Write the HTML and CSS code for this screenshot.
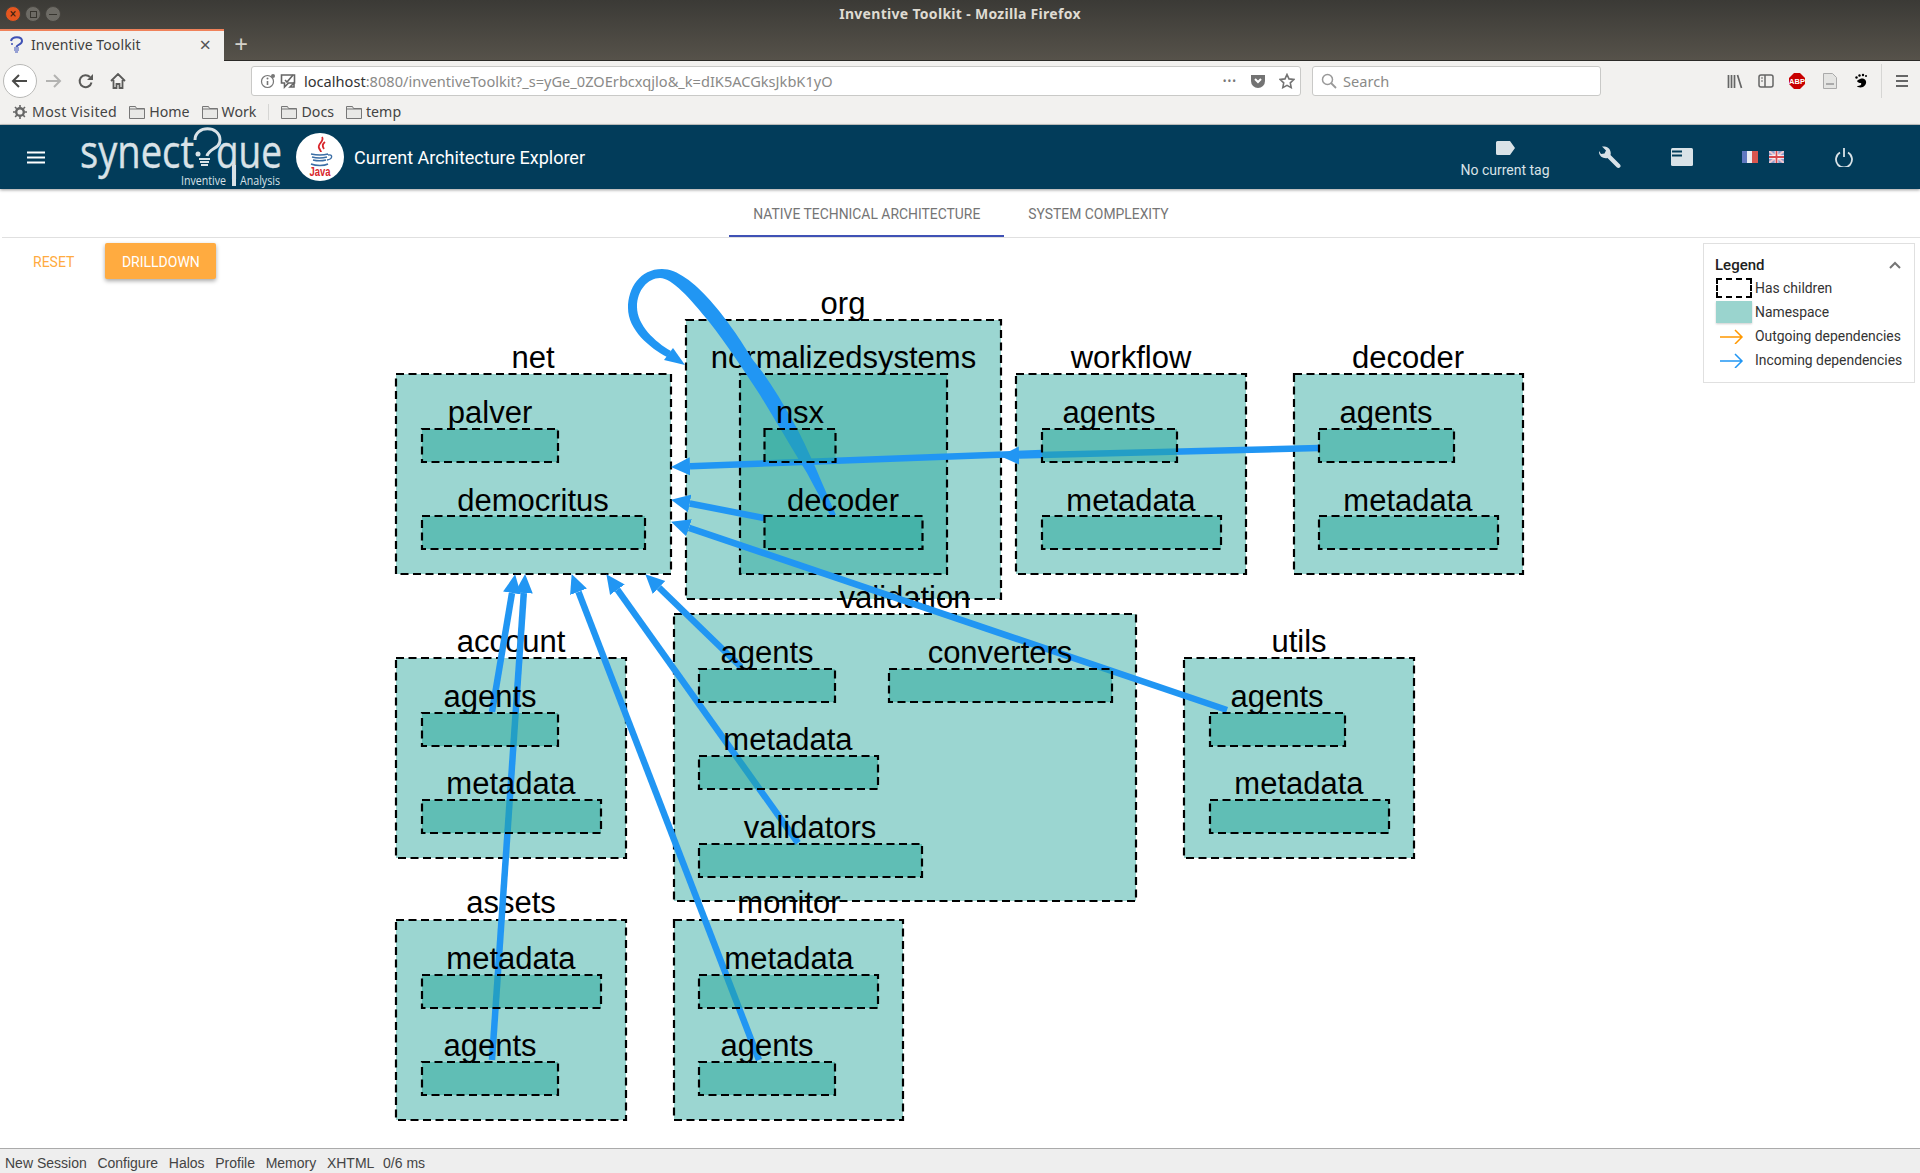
FILE: index.html
```html
<!DOCTYPE html>
<html>
<head>
    <title>Inventive Toolkit</title>
    <link rel="stylesheet" href="styles.css">
</head>
<body>
    <div class="window-top">
        <div class="titlebar">
            <div class="win-buttons">
                <span class="win-btn win-close">&#215;</span>
                <span class="win-btn"><i class="win-max"></i></span>
                <span class="win-btn"><i class="win-min"></i></span>
            </div>
            <div class="win-title">Inventive Toolkit - Mozilla Firefox</div>
        </div>
        <div class="tabstrip">
            <div class="tab">
                <svg class="tab-icon" width="16" height="18" viewBox="0 0 16 18"><path d="M2 5 C3 0 13 0 13 5 C13 9 8 8 7.5 11" fill="none" stroke="#3f51b5" stroke-width="2"/><circle cx="3" cy="8" r="1" fill="#3f51b5"/><path d="M5 12h5M5 14h5M6 16h3" stroke="#7986cb" stroke-width="1.4"/></svg>
                <span class="tab-name">Inventive Toolkit</span>
                <span class="tab-close">&#215;</span>
            </div>
            <span class="tab-new">+</span>
        </div>
    </div>

    <div class="navbar">
        <span class="nav-back">
            <svg width="18" height="18" viewBox="0 0 18 18"><path d="M16 9H2M8 3L2 9l6 6" fill="none" stroke="#4a4a48" stroke-width="2"/></svg>
        </span>
        <svg class="nav-icon nav-fwd" width="18" height="18" viewBox="0 0 18 18"><path d="M2 9h14M10 3l6 6-6 6" fill="none" stroke="#b3b3b1" stroke-width="2"/></svg>
        <svg class="nav-icon nav-reload" width="16" height="16" viewBox="0 0 16 16"><path d="M13.5 9.5A6 6 0 1 1 12 4" fill="none" stroke="#5a5a58" stroke-width="2"/><path d="M15 1v6H9z" fill="#5a5a58"/></svg>
        <svg class="nav-icon nav-home" width="16" height="16" viewBox="0 0 16 16"><path d="M1 8l7-7 7 7M3.5 7v8h3v-4h3v4h3V7" fill="none" stroke="#5a5a58" stroke-width="1.8"/></svg>
        <div class="urlbar">
            <svg class="url-info" width="16" height="16" viewBox="0 0 16 16"><circle cx="7.5" cy="8.5" r="6" fill="none" stroke="#777" stroke-width="1.2"/><path d="M7.5 8v4" stroke="#777" stroke-width="1.6"/><circle cx="7.5" cy="5.6" r="1" fill="#777"/><circle cx="13" cy="3" r="2" fill="#777"/></svg>
            <svg class="url-track" width="16" height="16" viewBox="0 0 16 16"><path d="M1.5 2h13v8h-6l-4 4v-4h-3z" fill="none" stroke="#666" stroke-width="1.6"/><path d="M5 7l2 2 6-7M10 14l4-4v4z" fill="none" stroke="#666" stroke-width="1.6"/></svg>
            <span class="url-text"><b>localhost</b>:8080/inventiveToolkit?_s=yGe_0ZOErbcxqjlo&amp;_k=dIK5ACGksJkbK1yO</span>
            <span class="url-dots">&#8226;&#8226;&#8226;</span>
            <svg class="url-pocket" width="16" height="16" viewBox="0 0 16 16"><path d="M1 2h14v6a7 7 0 0 1-14 0z" fill="#737373"/><path d="M5 6l3 3 3-3" fill="none" stroke="#fff" stroke-width="2"/></svg>
            <svg class="url-star" width="16" height="16" viewBox="0 0 16 16"><path d="M8 1.5l2 4.4 4.8.6-3.5 3.3.9 4.8L8 12.3l-4.2 2.3.9-4.8L1.2 6.5 6 5.900z" fill="none" stroke="#737373" stroke-width="1.6"/></svg>
        </div>
        <div class="searchbar">
            <svg width="16" height="16" viewBox="0 0 16 16"><circle cx="6.500" cy="6.500" r="5" fill="none" stroke="#999" stroke-width="1.500"/><path d="M10 10l5 5" stroke="#999" stroke-width="1.800"/></svg>
            <span>Search</span>
        </div>
        <div class="nav-tools">
            <svg width="16" height="16" viewBox="0 0 16 16"><path d="M1.500 2v13M4.500 2v13M7.500 2v13M10.500 2l4 13" stroke="#666" stroke-width="1.700" fill="none"/></svg>
            <svg width="16" height="16" viewBox="0 0 16 16"><rect x="1" y="2" width="14" height="12" rx="2" fill="none" stroke="#666" stroke-width="1.500"/><path d="M7 2v12" stroke="#666" stroke-width="1.500"/><path d="M3 5h2M3 8h2" stroke="#666"/></svg>
            <svg width="16" height="16" viewBox="0 0 16 16"><path d="M5 0h6l5 5v6l-5 5H5l-5-5V5z" fill="#c80000"/><text class="abp-text" x="8" y="11">ABP</text></svg>
            <svg class="tool-doc" width="14" height="16" viewBox="0 0 14 16"><path d="M.5.500h9l4 4v11H.5z" fill="#e4e4e2" stroke="#aaa"/><rect x="3" y="10" width="8" height="2" fill="#aaa"/></svg>
            <svg class="tool-foot" width="13" height="16" viewBox="0 0 13 16"><path d="M9 6c3 1 3 6-1 8-3 1-6 0-6-1 3 0 5-1 4-3-3 0-5-2-3-3 2-1 4-2 6-1z" fill="#000"/><circle cx="1.500" cy="4.500" r="1.200"/><circle cx="4.500" cy="2.500" r="1.200"/><circle cx="8" cy="2" r="1.200"/><circle cx="11" cy="3" r="1"/></svg>
            <i class="tool-sep"></i>
            <svg class="tool-menu" width="12" height="12" viewBox="0 0 12 12"><path d="M0 1h12M0 6h12M0 11h12" stroke="#666" stroke-width="2"/></svg>
        </div>
    </div>

    <div class="bookmarks">
        <span class="bm bm-first">
            <svg width="14" height="14" viewBox="0 0 14 14"><circle cx="7" cy="7" r="3.800" fill="none" stroke="#666" stroke-width="2.400"/><path d="M7 0v14M0 7h14M2 2l10 10M12 2L2 12" stroke="#666" stroke-width="1.600" stroke-dasharray="2.400 9.200"/></svg>
            Most Visited
        </span>
        <span class="bm"><svg class="folder" width="16" height="14" viewBox="0 0 16 14"><path d="M.5 13.500V1.500h6l1 2h8v10z" fill="#e8e8e6" stroke="#777"/><path d="M.5 4h15" stroke="#777"/></svg>Home</span>
        <span class="bm"><svg class="folder" width="16" height="14" viewBox="0 0 16 14"><path d="M.5 13.500V1.500h6l1 2h8v10z" fill="#e8e8e6" stroke="#777"/><path d="M.5 4h15" stroke="#777"/></svg>Work</span>
        <i class="bm-sep"></i>
        <span class="bm"><svg class="folder" width="16" height="14" viewBox="0 0 16 14"><path d="M.5 13.500V1.500h6l1 2h8v10z" fill="#e8e8e6" stroke="#777"/><path d="M.5 4h15" stroke="#777"/></svg>Docs</span>
        <span class="bm"><svg class="folder" width="16" height="14" viewBox="0 0 16 14"><path d="M.5 13.500V1.500h6l1 2h8v10z" fill="#e8e8e6" stroke="#777"/><path d="M.5 4h15" stroke="#777"/></svg>temp</span>
    </div>

    <header class="app-header">
        <svg class="hamburger" width="18" height="13" viewBox="0 0 18 13"><path d="M0 1.500h18M0 6.500h18M0 11.500h18" stroke="#fff" stroke-width="2"/></svg>
        <svg class="logo" width="212" height="84" viewBox="0 -10 212 84">
            <text class="logo-main" x="2" y="43" textLength="114" lengthAdjust="spacingAndGlyphs">synect</text>
            <text class="logo-main" x="138" y="43" textLength="66" lengthAdjust="spacingAndGlyphs">que</text>
            <path d="M156 40v21" stroke="#d9e2e7" stroke-width="4"/>
            <path d="M117 15c0-15 25-15 25 0 0 9-11 8-13 16" fill="none" stroke="#d9e2e7" stroke-width="3"/>
            <circle cx="120" cy="29" r="2.500" fill="#d9e2e7"/>
            <path d="M121 34h11M122 37h9M123 40h7" stroke="#d9e2e7" stroke-width="1.800"/>
            <text class="logo-sub" x="103" y="60" textLength="45" lengthAdjust="spacingAndGlyphs">Inventive</text>
            <text class="logo-sub" x="162" y="60" textLength="40" lengthAdjust="spacingAndGlyphs">Analysis</text>
        </svg>
        <svg class="java" width="48" height="48" viewBox="0 0 48 48">
            <circle cx="24" cy="24" r="24" fill="#fff"/>
            <path d="M26 4c3 4-5 7-3 11 1 2 2 3 2 4M29 9c-3 2-3 4-1 7" fill="none" stroke="#d8262c" stroke-width="1.800"/>
            <path d="M15 21c5 1 13 1 17 0M16 24c4 1 11 1 15 0M17 27c4 1 9 1 13 0M15 31c5 2 13 2 17 0M32 22c5-1 5 4-1 5" fill="none" stroke="#3b6ea5" stroke-width="1.400"/>
            <text class="java-text" x="24" y="43" textLength="21" lengthAdjust="spacingAndGlyphs">Java</text>
        </svg>
        <div class="app-title">Current Architecture Explorer</div>
        <div class="hdr-right">
            <div class="hdr-tag">
                <svg width="19" height="14" viewBox="0 0 19 14"><path d="M1.500 0H14l5 7-5 7H1.500A1.500 1.500 0 0 1 0 12.500v-11A1.500 1.500 0 0 1 1.500 0z" fill="#d9e2e7"/></svg>
                <span>No current tag</span>
            </div>
            <svg class="hdr-wrench" width="22" height="22" viewBox="0 0 22 22"><path d="M21 18.500L11.500 9C12.500 5.500 10.500 1 5.500 0.500L3 .5l4 4-1.500 3-3.500.5-2-3C-.5 10 4 13 8.500 12l9.500 9.500c.8.700 2.200.7 3-.2.800-.8.800-2-.0-2.800z" fill="#d9e2e7"/></svg>
            <svg class="hdr-book" width="22" height="18" viewBox="0 0 22 18"><rect width="22" height="18" rx="1.500" fill="#d9e2e7"/><path d="M1 3.500h10M1 7.500h10" stroke="#023c5a" stroke-width="2"/></svg>
            <div class="flags">
                <svg width="16" height="12" viewBox="0 0 16 12"><rect width="6" height="12" fill="#5f78c0"/><rect x="5" width="6" height="12" fill="#e9ecf2"/><rect x="10" width="6" height="12" fill="#d9564f"/></svg>
                <svg width="15" height="12" viewBox="0 0 15 12"><rect width="15" height="12" fill="#8f9ccc"/><path d="M0 0l15 12M15 0L0 12" stroke="#f1c9cf" stroke-width="2"/><path d="M7.500 0v12M0 6h15" stroke="#fff" stroke-width="3.500"/><path d="M7.500 0v12M0 6h15" stroke="#d9484e" stroke-width="1.800"/></svg>
            </div>
            <svg class="hdr-power" width="18" height="19" viewBox="0 0 18 19"><path d="M5 4.500a8 8 0 1 0 8 0M9 0v9" fill="none" stroke="#d9e2e7" stroke-width="1.800"/></svg>
        </div>
    </header>

    <nav class="tabs">
        <a class="tabs-item tabs-active">NATIVE TECHNICAL ARCHITECTURE</a>
        <a class="tabs-item">SYSTEM COMPLEXITY</a>
    </nav>

    <main class="explorer">
        <svg class="diagram" viewBox="0 238 1920 910" width="1920" height="910">
            <defs>
                <marker id="head" markerUnits="userSpaceOnUse" markerWidth="20" markerHeight="20" refX="0" refY="10" viewBox="0 0 20 20" orient="auto">
                    <path d="M0 1L19 10L0 19Z" fill="#2196f3"/>
                </marker>
            </defs>

            <!-- top level namespaces -->
            <rect class="ns" x="396" y="374" width="275" height="200"/>
            <rect class="ns" x="686" y="320" width="315" height="279"/>
            <rect class="ns" x="1016" y="374" width="230" height="200"/>
            <rect class="ns" x="1294" y="374" width="229" height="200"/>
            <rect class="ns" x="396" y="658" width="230" height="200"/>
            <rect class="ns" x="674" y="614" width="462" height="287"/>
            <rect class="ns" x="1184" y="658" width="230" height="200"/>
            <rect class="ns" x="396" y="920" width="230" height="200"/>
            <rect class="ns" x="674" y="920" width="229" height="200"/>
            <rect class="ns" x="740" y="374" width="207" height="200"/>

            <text class="lbl" x="533" y="368">net</text>
            <text class="lbl" x="843" y="314">org</text>
            <text class="lbl" x="843.500" y="368">normalizedsystems</text>
            <text class="lbl" x="1131" y="368">workflow</text>
            <text class="lbl" x="1408" y="368">decoder</text>
            <text class="lbl" x="511" y="652">account</text>
            <text class="lbl" x="905" y="608">validation</text>
            <text class="lbl" x="1299" y="652">utils</text>
            <text class="lbl" x="511" y="913">assets</text>
            <text class="lbl" x="789" y="913">monitor</text>

            <!-- dependencies -->
            <line class="dep" x1="492" y1="712" x2="512" y2="593" marker-end="url(#head)"/>
            <line class="dep" x1="492" y1="1060" x2="523.800" y2="593" marker-end="url(#head)"/>
            <line class="dep" x1="759" y1="1060" x2="578.500" y2="591.800" marker-end="url(#head)"/>
            <line class="dep" x1="798" y1="843" x2="617.400" y2="589.700" marker-end="url(#head)"/>
            <line class="dep" x1="741" y1="667" x2="659" y2="587.500" marker-end="url(#head)"/>
            <line class="dep" x1="1042" y1="453" x2="690" y2="466.300" marker-end="url(#head)"/>
            <line class="dep" x1="1319" y1="448" x2="1019" y2="455.500" marker-end="url(#head)"/>
            <line class="dep" x1="764" y1="518" x2="689.700" y2="503.500" marker-end="url(#head)"/>
            <line class="dep" x1="1227" y1="710" x2="689" y2="527.800" marker-end="url(#head)"/>
            <path class="dep-loop" d="M836 515C825 490 808 448 795 425C781 400 768 378 753 360C730 322 692 269 662 269C640 269 628 288 628 308C628 330 650 348 667 357L671 351C655 342 637 325 637 307C637 290 648 278 660 278C672 278 690 298 710 323C725 342 745 372 760 395C772 415 790 445 807 473C815 488 823 503 830 515Z"/>
            <path class="dep-loop" d="M673 348L664 360L685 365Z"/>

            <!-- leaf namespaces -->
            <rect class="leaf" x="422" y="429" width="136" height="33"/>
            <rect class="leaf" x="422" y="516" width="223" height="33"/>
            <rect class="leaf" x="764.500" y="429" width="71" height="33"/>
            <rect class="leaf" x="764.500" y="516" width="158" height="33"/>
            <rect class="leaf" x="1042" y="429" width="135" height="33"/>
            <rect class="leaf" x="1042" y="516" width="179" height="33"/>
            <rect class="leaf" x="1319" y="429" width="135" height="33"/>
            <rect class="leaf" x="1319" y="516" width="179" height="33"/>
            <rect class="leaf" x="422" y="713" width="136" height="33"/>
            <rect class="leaf" x="422" y="800" width="179" height="33"/>
            <rect class="leaf" x="699" y="669" width="136" height="33"/>
            <rect class="leaf" x="889" y="669" width="223" height="33"/>
            <rect class="leaf" x="699" y="756" width="179" height="33"/>
            <rect class="leaf" x="699" y="844" width="223" height="33"/>
            <rect class="leaf" x="1210" y="713" width="135" height="33"/>
            <rect class="leaf" x="1210" y="800" width="179" height="33"/>
            <rect class="leaf" x="422" y="975" width="179" height="33"/>
            <rect class="leaf" x="422" y="1062" width="136" height="33"/>
            <rect class="leaf" x="699" y="975" width="179" height="33"/>
            <rect class="leaf" x="699" y="1062" width="136" height="33"/>

            <text class="lbl" x="490" y="423">palver</text>
            <text class="lbl" x="533" y="510.500">democritus</text>
            <text class="lbl" x="800" y="423">nsx</text>
            <text class="lbl" x="843" y="510.500">decoder</text>
            <text class="lbl" x="1109" y="423">agents</text>
            <text class="lbl" x="1131" y="510.500">metadata</text>
            <text class="lbl" x="1386" y="423">agents</text>
            <text class="lbl" x="1408" y="510.500">metadata</text>
            <text class="lbl" x="490" y="707">agents</text>
            <text class="lbl" x="511" y="794">metadata</text>
            <text class="lbl" x="767" y="663">agents</text>
            <text class="lbl" x="1000" y="663">converters</text>
            <text class="lbl" x="788" y="750">metadata</text>
            <text class="lbl" x="810" y="838">validators</text>
            <text class="lbl" x="1277" y="707">agents</text>
            <text class="lbl" x="1299" y="794">metadata</text>
            <text class="lbl" x="511" y="969">metadata</text>
            <text class="lbl" x="490" y="1056">agents</text>
            <text class="lbl" x="789" y="969">metadata</text>
            <text class="lbl" x="767" y="1056">agents</text>
        </svg>

        <div class="actions">
            <button class="btn-reset">RESET</button>
            <button class="btn-drill">DRILLDOWN</button>
        </div>

        <aside class="legend">
            <div class="legend-head">
                <span>Legend</span>
                <svg width="12" height="8" viewBox="0 0 12 8"><path d="M1 7l5-5 5 5" fill="none" stroke="#757575" stroke-width="2"/></svg>
            </div>
            <div class="legend-row"><i class="swatch swatch-dash"></i>Has children</div>
            <div class="legend-row"><i class="swatch swatch-fill"></i>Namespace</div>
            <div class="legend-row">
                <svg class="swatch-arrow" width="36" height="16" viewBox="0 0 36 16"><path d="M4 9h22M19 2l7 7-7 7" fill="none" stroke="#ff9800" stroke-width="1.500"/></svg>Outgoing dependencies
            </div>
            <div class="legend-row">
                <svg class="swatch-arrow" width="36" height="16" viewBox="0 0 36 16"><path d="M4 9h22M19 2l7 7-7 7" fill="none" stroke="#2196f3" stroke-width="1.500"/></svg>Incoming dependencies
            </div>
        </aside>
    </main>

    <footer class="statusbar">
        <a>New Session</a>
        <a>Configure</a>
        <a>Halos</a>
        <a>Profile</a>
        <a>Memory</a>
        <a>XHTML</a>
        <span class="status-time">0/6 ms</span>
    </footer>
</body>
</html>
```

FILE: styles.css
```css
* {
    box-sizing: border-box;
}
html, body {
    margin: 0;
    height: 100%;
}
body {
    display: flex;
    flex-direction: column;
    height: 1173px;
    overflow: hidden;
    font-family: Roboto, sans-serif;
    background-color: #fff;
}

/* browser chrome */
.window-top {
    height: 61px;
    background: linear-gradient(#3b3a36, #56524a);
    border-bottom: 1px solid #2b2a27;
}
.titlebar {
    height: 29px;
    position: relative;
    display: flex;
    align-items: center;
    justify-content: center;
    padding-bottom: 2px;
}
.win-buttons {
    position: absolute;
    left: 5px;
    top: 6px;
    display: flex;
    gap: 4px;
}
.win-btn {
    width: 16px;
    height: 16px;
    border-radius: 50%;
    background-color: #6d6b65;
    border: 1px solid #45433e;
    display: flex;
    align-items: center;
    justify-content: center;
}
.win-close {
    background-color: #e5561f;
    color: #40200f;
    font-size: 12px;
    line-height: 1;
}
.win-max {
    width: 7px;
    height: 7px;
    border: 1px solid #37352f;
}
.win-min {
    width: 8px;
    height: 1px;
    background-color: #37352f;
}
.win-title {
    color: #dfdbd2;
    font: bold 14px "Noto Sans", sans-serif;
    letter-spacing: 0.3px;
}
.tabstrip {
    height: 31px;
    display: flex;
    align-items: stretch;
}
.tab {
    width: 224px;
    height: 32px;
    background-color: #f2f1ef;
    border-top: 2px solid #f0825a;
    display: flex;
    align-items: center;
    padding: 0 13px 3px 9px;
    font: 14px "Noto Sans", sans-serif;
    color: #3f3f3d;
}
.tab-icon {
    flex: none;
    margin-right: 6px;
}
.tab-name {
    flex: 1;
    letter-spacing: 0.1px;
}
.tab-close {
    font-size: 20px;
    line-height: 1;
    color: #555;
}
.tab-new {
    width: 32px;
    text-align: center;
    color: #d5d2ca;
    font: 24px/30px "Noto Sans", sans-serif;
    margin-left: 1px;
}
.navbar {
    height: 43px;
    background-color: #f2f1ef;
    display: flex;
    align-items: center;
    padding: 0 0 3px 3px;
}
.nav-back {
    width: 34px;
    height: 34px;
    border-radius: 50%;
    background-color: #fff;
    border: 1px solid #b9b9b7;
    display: flex;
    align-items: center;
    justify-content: center;
}
.nav-icon {
    flex: none;
}
.nav-fwd {
    margin-left: 7px;
}
.nav-reload {
    margin-left: 16px;
}
.nav-home {
    margin-left: 16px;
}
.urlbar, .searchbar {
    height: 30px;
    background-color: #fff;
    border: 1px solid #c9c9c7;
    border-radius: 3px;
    display: flex;
    align-items: center;
}
.urlbar {
    width: 1050px;
    margin-left: 125px;
    padding-left: 8px;
    font: 14.6px "Noto Sans", sans-serif;
    color: #8a8a88;
}
.url-track {
    margin-left: 4px;
}
.url-text {
    margin-left: 8px;
    flex: 1;
    white-space: nowrap;
}
.url-text b {
    font-weight: normal;
    color: #333;
}
.url-dots {
    color: #777;
    font-size: 10px;
    letter-spacing: 1px;
    margin-right: 13px;
}
.url-pocket {
    margin-right: 13px;
}
.url-star {
    margin-right: 5px;
}
.searchbar {
    width: 289px;
    margin-left: 11px;
    padding-left: 8px;
    gap: 6px;
    font: 14.6px "Noto Sans", sans-serif;
    color: #8a8a88;
}
.nav-tools {
    display: flex;
    align-items: center;
    margin-left: 126px;
    gap: 15px;
}
.abp-text {
    font: bold 7.5px "Liberation Sans", sans-serif;
    fill: #fff;
    text-anchor: middle;
}
.tool-doc, .tool-foot {
    margin-left: 3px;
}
.tool-sep {
    width: 1px;
    height: 34px;
    background-color: #d6d6d4;
    margin-left: -2px;
}
.tool-menu {
    margin-left: -1px;
}
.bookmarks {
    height: 21px;
    background-color: #f2f1ef;
    border-bottom: 1px solid #c8c8c6;
    display: flex;
    align-items: center;
    padding: 0 0 5px 13px;
    font: 14.2px "Noto Sans", sans-serif;
    color: #444;
    gap: 12px;
}
.bm {
    display: flex;
    align-items: center;
    gap: 4px;
}
.bm-first {
    gap: 5px;
    letter-spacing: 0.3px;
}
.bm-sep {
    width: 1px;
    height: 16px;
    background-color: #d6d6d4;
}

/* app header */
.app-header {
    height: 64px;
    background-color: #023c5a;
    display: flex;
    align-items: center;
    padding: 0 67px 0 27px;
    box-shadow: 0 1px 3px rgba(0, 0, 0, 0.4);
    position: relative;
}
.hamburger {
    flex: none;
}
.logo {
    flex: none;
    margin: -10px 0 -10px 33px;
}
.logo-main {
    font: 400 45px "Open Sans", sans-serif;
    fill: #d9e2e7;
    stroke: #d9e2e7;
    stroke-width: 0.4;
}
.logo-sub {
    font: 12px "Open Sans", sans-serif;
    fill: #d9e2e7;
}
.java {
    flex: none;
    margin-left: 6px;
}
.java-text {
    font: bold 12px "Liberation Sans", sans-serif;
    fill: #d8262c;
    text-anchor: middle;
}
.app-title {
    margin-left: 10px;
    color: #fff;
    font-size: 18px;
}
.hdr-right {
    margin-left: auto;
    display: flex;
    align-items: center;
    color: #d9e2e7;
}
.hdr-tag {
    width: 100px;
    display: flex;
    flex-direction: column;
    align-items: center;
    gap: 7px;
    font-size: 14px;
    margin-right: 44px;
    padding-top: 4px;
}
.hdr-wrench {
    margin-right: 50px;
}
.hdr-book {
    margin-right: 49px;
}
.flags {
    display: flex;
    gap: 11px;
    margin-right: 51px;
}

/* page tabs */
.tabs {
    height: 49px;
    display: flex;
    justify-content: center;
    border-bottom: 1px solid #e0e0e0;
    margin-left: 2px;
}
.tabs-item {
    height: 48px;
    padding: 3px 24px 0;
    display: flex;
    align-items: center;
    font-size: 13.9px;
    color: #757575;
    border-bottom: 2px solid transparent;
}
.tabs-active {
    border-bottom-color: #3f51b5;
}

/* explorer */
.explorer {
    flex: 1;
    position: relative;
    min-height: 0;
}
.diagram {
    position: absolute;
    left: 0;
    top: 0;
}
.ns {
    fill: #26a69a;
    fill-opacity: 0.46;
    stroke: #000;
    stroke-width: 2.2;
    stroke-dasharray: 8 4.5;
}
.leaf {
    fill: #26a69a;
    fill-opacity: 0.5;
    stroke: #000;
    stroke-width: 2.2;
    stroke-dasharray: 8 4.5;
}
.lbl {
    font: 31px "Liberation Sans", sans-serif;
    fill: #000;
    text-anchor: middle;
}
.dep {
    stroke: #2196f3;
    stroke-width: 6.5;
}
.dep-loop {
    fill: #2196f3;
}
.actions {
    position: relative;
    display: flex;
    align-items: center;
    padding: 5px 0 0 33px;
    gap: 31px;
}
.btn-reset, .btn-drill {
    font: 14px Roboto, sans-serif;
    border: 0;
    border-radius: 2px;
    background: none;
    padding: 1px 0 0;
}
.btn-reset {
    color: #ffab40;
}
.btn-drill {
    width: 111px;
    height: 36px;
    background-color: #ffab40;
    color: #fff;
    box-shadow: 0 2px 4px rgba(0, 0, 0, 0.35);
}
.legend {
    position: absolute;
    left: 1703px;
    top: 5px;
    width: 212px;
    height: 140px;
    border: 1px solid #e0e0e0;
    background-color: #fff;
    padding: 10px 10px 0 11px;
    font-size: 13.9px;
    color: #333;
}
.legend-head {
    display: flex;
    align-items: center;
    justify-content: space-between;
    font-size: 15px;
    font-weight: 500;
    height: 22px;
    padding-right: 3px;
    color: #212121;
}
.legend-row {
    height: 24px;
    display: flex;
    align-items: center;
    white-space: nowrap;
}
.swatch {
    width: 36px;
    margin: 0 3px 0 1px;
    flex: none;
}
.swatch-dash {
    height: 20px;
    border: 2px dashed #000;
}
.swatch-fill {
    height: 22px;
    background-color: #9ad4ce;
    box-shadow: 0 1px 2px rgba(0, 0, 0, 0.2);
}
.swatch-arrow {
    flex: none;
    margin: 0 3px 0 1px;
}

/* seaside toolbar */
.statusbar {
    height: 25px;
    background-color: #eee;
    border-top: 1px solid #aaa;
    display: flex;
    align-items: center;
    gap: 10.7px;
    padding: 4px 0 0 5px;
    font: 14px "Liberation Sans", sans-serif;
    color: #444;
}
.status-time {
    margin-left: -2px;
}
```
